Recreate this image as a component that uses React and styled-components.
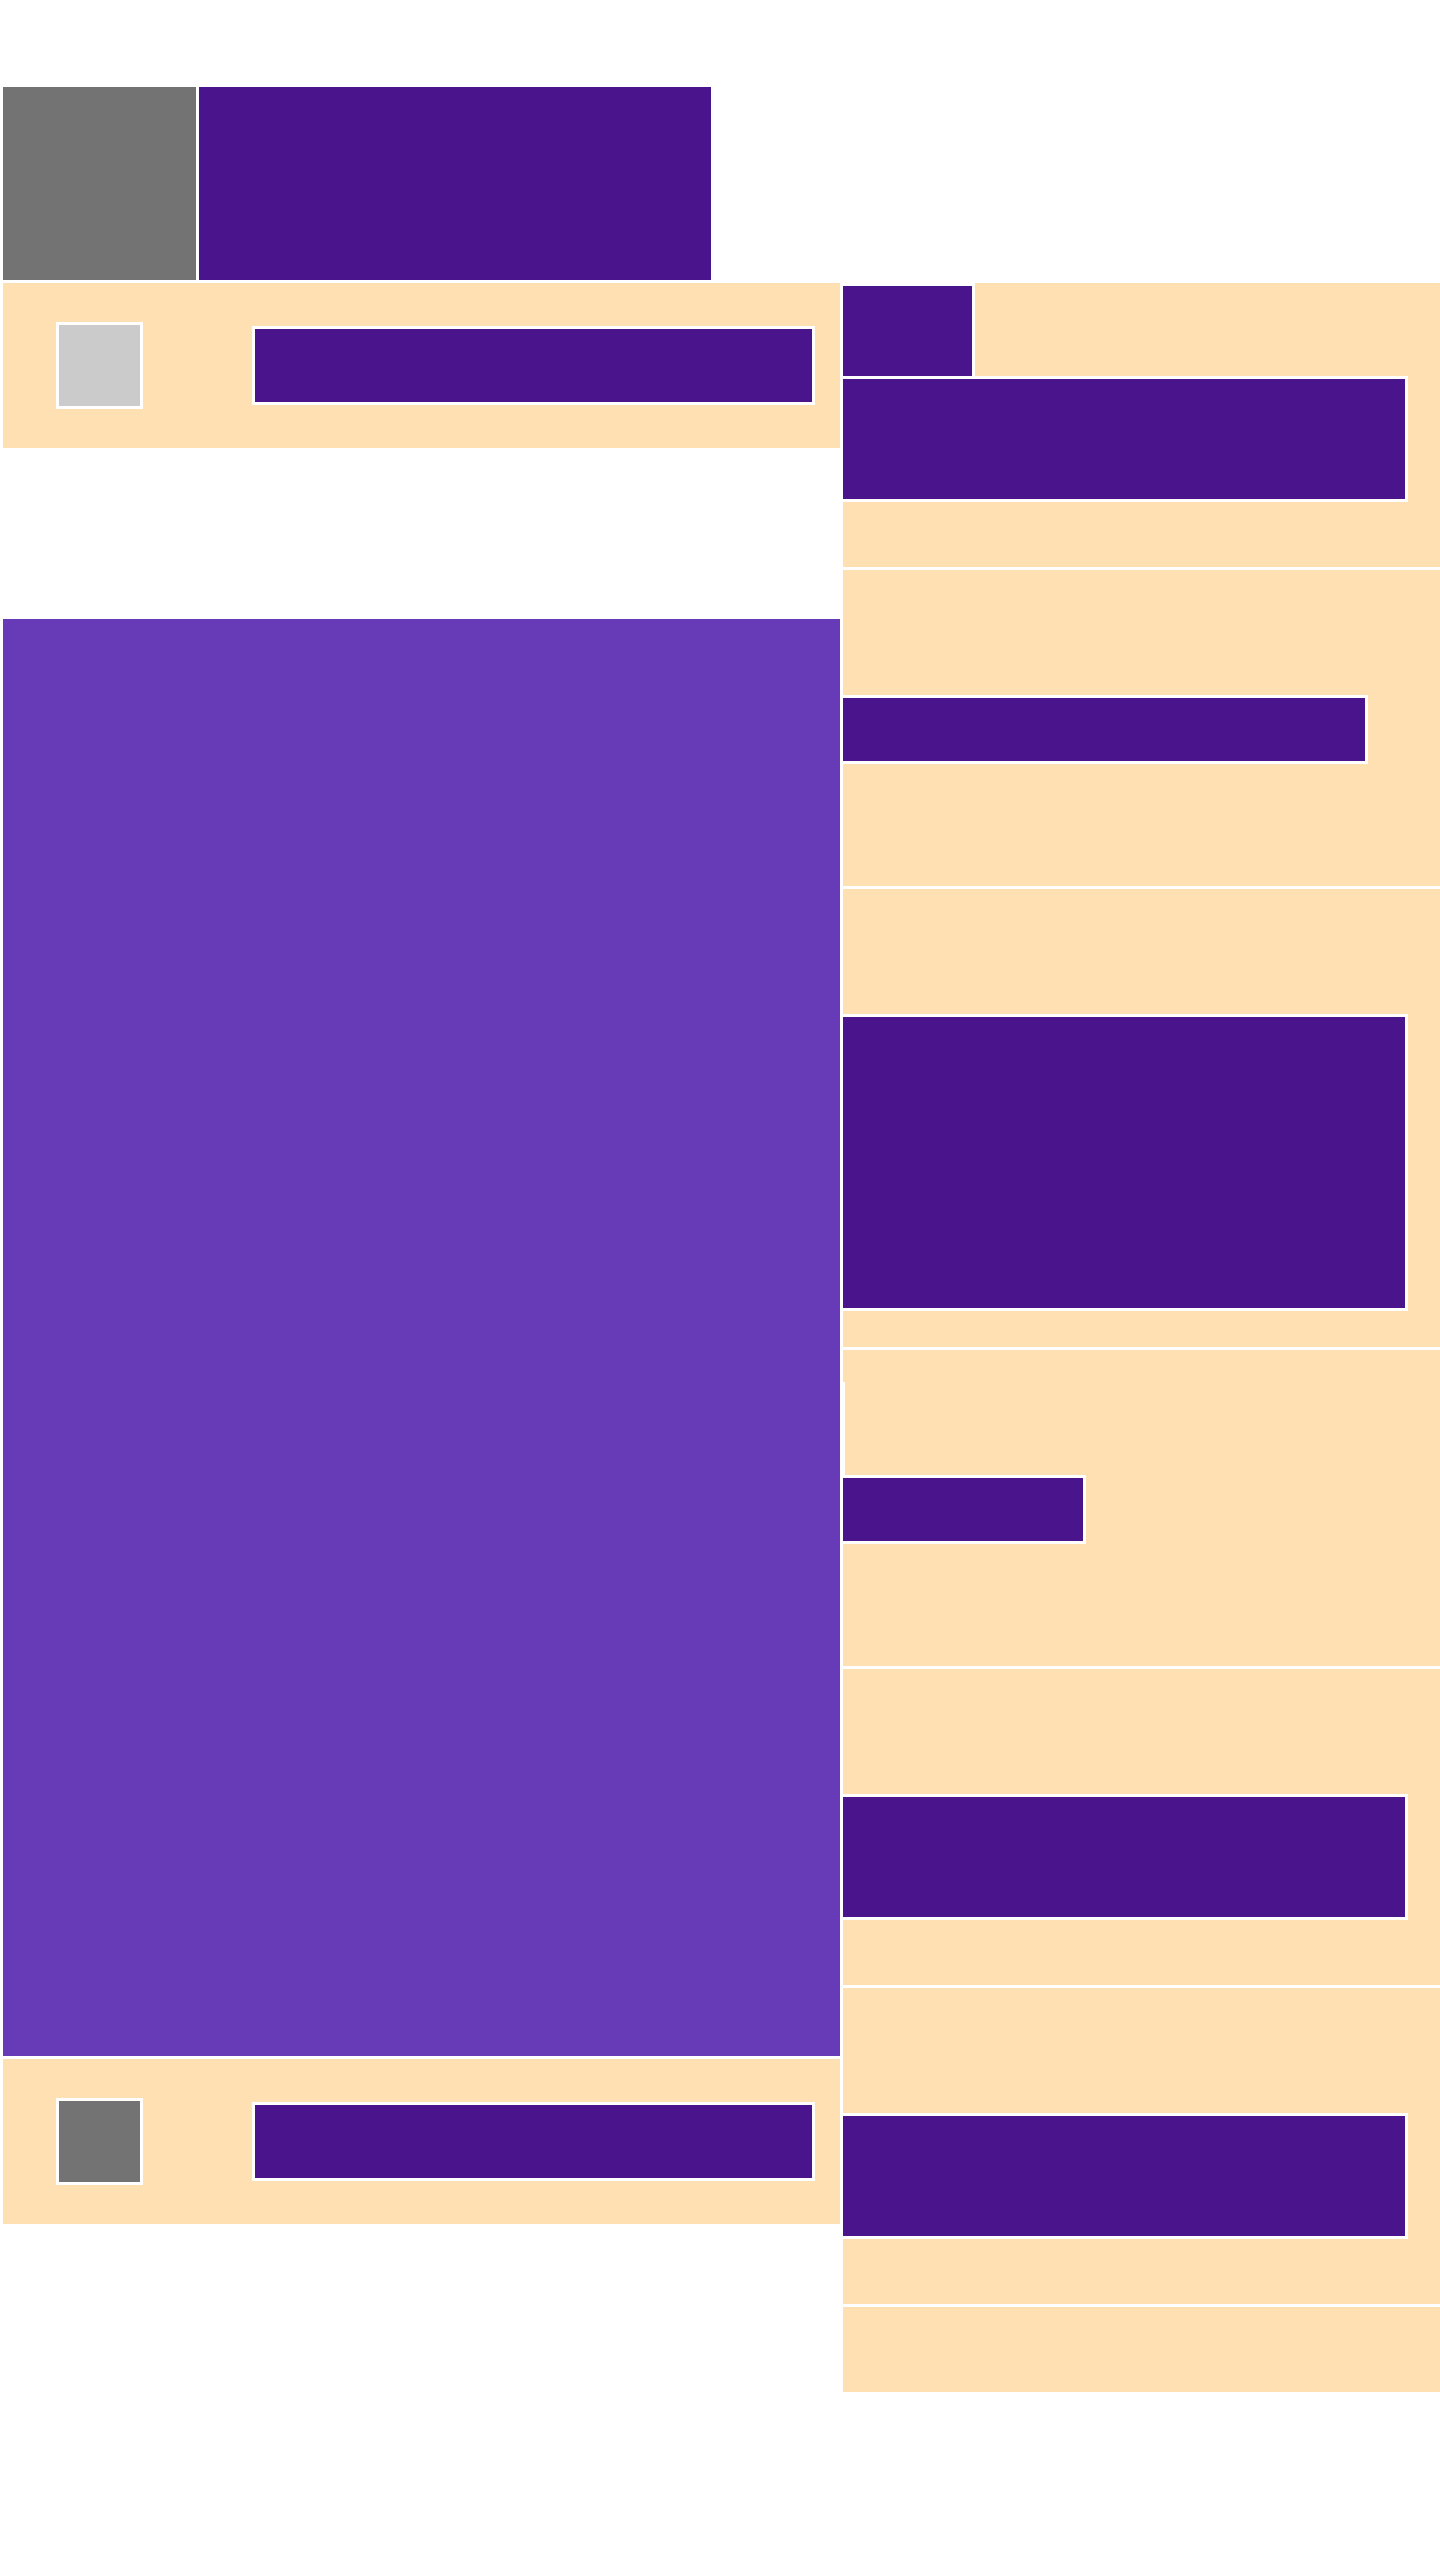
import React from "react";
import styled, { createGlobalStyle } from "styled-components";

const PEACH = "#FFE0B2";
const PLUM = "#4A148C";
const VIOLET = "#673AB7";
const GREY = "#737373";
const SILVER = "#CBCBCB";

const GlobalStyle = createGlobalStyle`
  *, *::before, *::after { box-sizing: border-box; }
  html, body {
    margin: 0;
    padding: 0;
    background: #ffffff;
    font-family: "Liberation Sans", Arial, sans-serif;
  }
`;

const Page = styled.div`
  display: flex;
  flex-direction: column;
  gap: 3px;
  padding-top: 87px;
  min-height: 2560px;
  background: #ffffff;
`;

const Masthead = styled.header`
  display: flex;
  gap: 3px;
  padding-left: 3px;
  height: 193px;
`;

const Tile = styled.div`
  width: ${(p) => p.$w}px;
  height: 100%;
  background: ${(p) => p.$bg};
`;

const Layout = styled.div`
  display: grid;
  grid-template-columns: 837px 597px;
  column-gap: 3px;
  padding-left: 3px;
  align-items: start;
`;

const LeftColumn = styled.div`
  display: flex;
  flex-direction: column;
`;

const Strip = styled.div`
  display: flex;
  align-items: center;
  height: 165px;
  padding-left: 53px;
  background: ${PEACH};
  margin-top: ${(p) => p.$offset || 0}px;
`;

const Thumb = styled.div`
  width: 87px;
  height: 87px;
  border: 3px solid #ffffff;
  background: ${(p) => p.$bg};
  flex: none;
`;

const Track = styled.div`
  width: 563px;
  height: 79px;
  margin-left: 109px;
  border: 3px solid #ffffff;
  background: ${PLUM};
  flex: none;
`;

const Stage = styled.main`
  height: 1437px;
  margin-top: 171px;
  background: ${VIOLET};
`;

const RightColumn = styled.aside`
  display: flex;
  flex-direction: column;
  gap: 3px;
`;

const Section = styled.section`
  display: flex;
  flex-direction: column;
  align-items: flex-start;
  height: ${(p) => p.$h}px;
  padding-top: ${(p) => p.$pad || 0}px;
  background: ${PEACH};
`;

const Block = styled.div`
  width: ${(p) => p.$w}px;
  height: ${(p) => p.$h}px;
  background: ${PLUM};
  border-top: 3px solid #ffffff;
  border-right: 3px solid #ffffff;
  border-bottom: ${(p) => (p.$open ? "0" : "3px solid #ffffff")};
  flex: none;
`;

const Notch = styled.div`
  width: 2px;
  height: ${(p) => p.$h}px;
  background: #ffffff;
  flex: none;
`;

export default function App() {
  return (
    <>
      <GlobalStyle />
      <Page>
        <Masthead>
          <Tile $w={193} $bg={GREY} />
          <Tile $w={512} $bg={PLUM} />
        </Masthead>
        <Layout>
          <LeftColumn>
            <Strip>
              <Thumb $bg={SILVER} />
              <Track />
            </Strip>
            <Stage />
            <Strip $offset={3}>
              <Thumb $bg={GREY} />
              <Track />
            </Strip>
          </LeftColumn>
          <RightColumn>
            <Section $h={284}>
              <Block $w={132} $h={93} $open />
              <Block $w={565} $h={126} />
            </Section>
            <Section $h={316} $pad={125}>
              <Block $w={525} $h={69} />
            </Section>
            <Section $h={458} $pad={125}>
              <Block $w={565} $h={297} />
            </Section>
            <Section $h={316} $pad={32}>
              <Notch $h={93} />
              <Block $w={243} $h={69} />
            </Section>
            <Section $h={316} $pad={125}>
              <Block $w={565} $h={126} />
            </Section>
            <Section $h={316} $pad={125}>
              <Block $w={565} $h={126} />
            </Section>
            <Section $h={85} />
          </RightColumn>
        </Layout>
      </Page>
    </>
  );
}
